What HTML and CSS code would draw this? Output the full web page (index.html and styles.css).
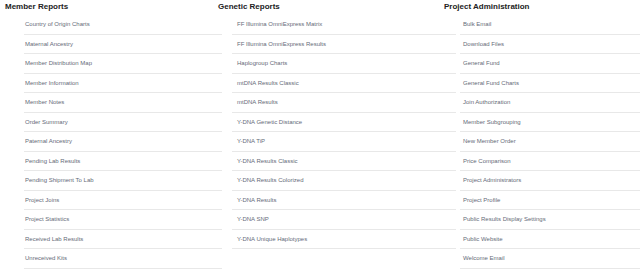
FILE: index.html
```html
<!DOCTYPE html>
<html>
    <head>
        <title>Project Reports</title>
        <link rel="stylesheet" href="styles.css">
    </head>
    <body>
        <div id="reports_wrapper">
            <div class="report_column column1">
                <h3>Member Reports</h3>
                <ul class="report_list">
                    <li>Country of Origin Charts</li>
                    <li>Maternal Ancestry</li>
                    <li>Member Distribution Map</li>
                    <li>Member Information</li>
                    <li>Member Notes</li>
                    <li>Order Summary</li>
                    <li>Paternal Ancestry</li>
                    <li>Pending Lab Results</li>
                    <li>Pending Shipment To Lab</li>
                    <li>Project Joins</li>
                    <li>Project Statistics</li>
                    <li>Received Lab Results</li>
                    <li>Unreceived Kits</li>
                </ul>
            </div>

            <div class="report_column column2">
                <h3>Genetic Reports</h3>
                <ul class="report_list">
                    <li>FF Illumina OmniExpress Matrix</li>
                    <li>FF Illumina OmniExpress Results</li>
                    <li>Haplogroup Charts</li>
                    <li>mtDNA Results Classic</li>
                    <li>mtDNA Results</li>
                    <li>Y-DNA Genetic Distance</li>
                    <li>Y-DNA TiP</li>
                    <li>Y-DNA Results Classic</li>
                    <li>Y-DNA Results Colorized</li>
                    <li>Y-DNA Results</li>
                    <li>Y-DNA SNP</li>
                    <li>Y-DNA Unique Haplotypes</li>
                </ul>
            </div>

            <div class="report_column column3">
                <h3>Project Administration</h3>
                <ul class="report_list">
                    <li>Bulk Email</li>
                    <li>Download Files</li>
                    <li>General Fund</li>
                    <li>General Fund Charts</li>
                    <li>Join Authorization</li>
                    <li>Member Subgrouping</li>
                    <li>New Member Order</li>
                    <li>Price Comparison</li>
                    <li>Project Administrators</li>
                    <li>Project Profile</li>
                    <li>Public Results Display Settings</li>
                    <li>Public Website</li>
                    <li>Welcome Email</li>
                </ul>
            </div>
        </div>
    </body>
</html>
```

FILE: styles.css
```css
body
{
    margin:0;
    background-color:#FFFFFF;
    font-family:"Liberation Sans", Arial, sans-serif;
    overflow:hidden;
}

#reports_wrapper
{
    display:grid;
    grid-template-columns:213px 226px 1fr;
    padding-left:5px;
}

.report_column h3
{
    margin:0;
    height:15.3px;
    line-height:14.6px;
    font-size:8px;
    font-weight:bold;
    color:#222222;
}

.report_list
{
    list-style:none;
    margin:0;
    padding:0;
}

.report_list li
{
    height:18.5px;
    line-height:18.5px;
    padding-left:3px;
    border-bottom:1px solid #E8E8E8;
    font-size:6px;
    color:#656B78;
    white-space:nowrap;
}

.column1 .report_list
{
    margin:0 -4px 0 19px;
}

.column1 .report_list li
{
    padding-left:1px;
}

.column2 .report_list
{
    margin:0 -12px 0 14px;
}

.column2 .report_list li
{
    padding-left:5px;
}

.column3 .report_list
{
    margin:0 0 0 16px;
}
```
